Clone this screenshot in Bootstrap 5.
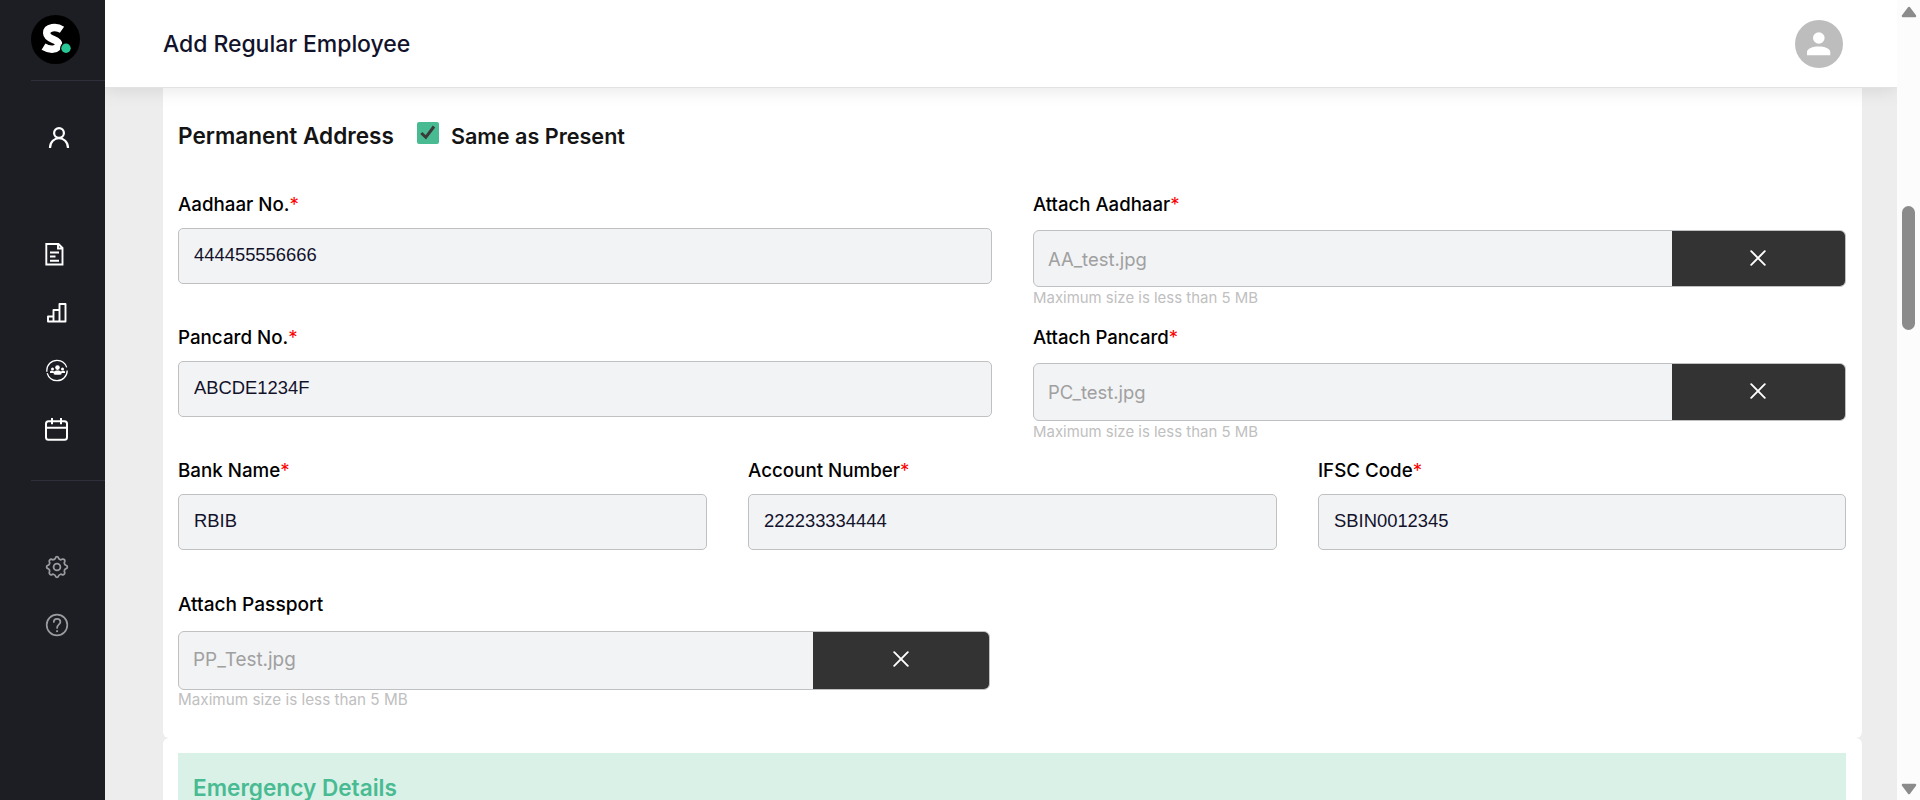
<!DOCTYPE html>
<html lang="en">
<head>
<meta charset="utf-8">
<meta name="viewport" content="width=device-width, initial-scale=1">
<title>Add Regular Employee</title>
<link href="https://cdn.jsdelivr.net/npm/bootstrap@5.3.0/dist/css/bootstrap.min.css" rel="stylesheet">
<style>
  body { font-family: Inter, "Liberation Sans", sans-serif; background: #ededed; color: #000; }
  .side { width: 105px; background: #1d1e23; color: #fff; }
  .side svg { display: block; flex: none; }
  .logo-wrap { padding: 15px 0 16px 31px; }
  .rule { height: 1px; margin-left: 31px; background: #2e303b; }
  .side-link { height: 58.3px; padding-left: 45px; color: inherit; }
  .side-foot { color: #9b9ca0; padding-top: 56px; }
  .topbar { height: 88px; border-bottom: 1px solid #e2e2e2; padding: 0 54px 0 58px; box-shadow: 0 2px 18px rgba(0,0,0,.1); z-index: 2; }
  .page-title { font-size: 23px; font-weight: 500; color: #12122b; letter-spacing: -.06px; padding-top: 2px; }
  .sheet { margin: 0 35px 0 58px; background: #fff; }
  .sheet-main { height: 650px; border-radius: 0 0 6px 6px; padding: 34px 16px 0 15px; }
  .sheet-next { border-radius: 6px 6px 0 0; padding: 15px 16px 0 15px; height: 200px; }
  .section-head { height: 28px; font-size: 22.6px; font-weight: 600; color: #141414; line-height: 28px; }
  .same { font-size: 21.6px; }
  .tick { width: 22px; height: 22px; background: #49bb92; border-radius: 2px; margin: -6px 12px 0 23px; }
  .fields { display: grid; column-gap: 41px; height: 133.2px; }
  .two { grid-template-columns: 814px 813px; }
  .three { grid-template-columns: 529px 529px 528px; }
  .lbl { display: block; height: 28px; line-height: 28px; padding-top: 1px; font-size: 18.75px; font-weight: 500; margin-bottom: 10px; }
  .lbl i { font-style: normal; font-weight: 400; color: #f00; }
  .form-control.inp { height: 56px; border: 1px solid #bfc0c1; border-radius: 5px; background: #f2f3f5; padding: 0 15px 2px; font: 18.4px "Liberation Sans", Arial, sans-serif; color: #12122b; box-shadow: none; }
  .attach .lbl { margin-bottom: 12px; padding-top: 0; font-size: 18.6px; }
  .filebox { height: 57.4px; border: 1px solid #bfc0c1; border-radius: 6px; background: #f2f3f5; overflow: hidden; }
  .fname { padding-left: 14px; padding-top: 2px; font-size: 18.45px; color: #a0a0a0; }
  .remove { width: 173px; background: #333; border: 0; margin: -1px 0; padding: 0 1px 2px 0; color: #fff; }
  .hint { font-size: 14.95px; line-height: 20px; margin-top: 1px; color: #c0c0c0; }
  .passport { width: 812px; }
  .attach.passport .lbl { font-size: 19.1px; margin-bottom: 13px; }
  .passport .filebox { height: 59px; }
  .passport .fname { font-size: 18.9px; padding-left: 14px; padding-top: 0; }
  .passport .remove { width: 176px; }
  .passport .hint { font-size: 15.25px; margin-top: 0; }
  .banner { background: #daf1e8; color: #49bb92; height: 90px; padding: 21px 15px; font-size: 22.6px; font-weight: 600; line-height: 28px; }
  .scroller { width: 23px; background: #fcfcfc; color: #8b8b8b; padding: 6px 0 5px; }
  .thumb { width: 13px; height: 124px; border-radius: 7px; background: #8b8b8b; margin-top: 188px; }
</style>
</head>
<body class="vh-100 overflow-hidden">
<div class="d-flex vh-100 overflow-hidden">
  <aside class="side flex-shrink-0">
    <div class="logo-wrap">
      <svg width="49" height="49" viewBox="0 0 49 49"><circle cx="24.5" cy="24.5" r="24.5" fill="#000"/><path d="M31 14.800C25.500 11 15.500 12 15.700 18.200C16 25.500 28 23.500 27.500 29.200C27 35.500 18.500 35.300 12.500 31.700" fill="none" stroke="#fff" stroke-width="7.400"/><circle cx="35" cy="33.500" r="6" fill="#000"/><circle cx="35" cy="33.300" r="4.700" fill="#29c795"/></svg>
    </div>
    <div class="rule"></div>
    <nav class="d-flex flex-column">
      <a class="side-link d-flex align-items-center ps-0" style="margin-top:28px" href="#"><svg style="margin-left:48px" width="22" height="24" viewBox="0 0 22 24" fill="none" stroke="#fff" stroke-width="2.200"><circle cx="11" cy="7" r="4.900"/><path d="M2 22C2 9 20 9 20 22"/></svg></a>
      <a class="side-link d-flex align-items-center" style="margin-top:58px" href="#"><svg width="20" height="24" viewBox="0 0 20 24" fill="none" stroke="#fff" stroke-width="1.900"><path d="M1.300 2H13.500L17.500 6V22.500H1.300ZM13 2V6.500H17.500M5 10.500H14M5 14.500H10.500M5 18.700H14"/></svg></a>
      <a class="side-link d-flex align-items-center" href="#"><svg width="24" height="24" viewBox="0 0 24 24" fill="none" stroke="#fff" stroke-width="1.900" stroke-linejoin="round"><path d="M3 20.500V15.500H8.500V9H14.500V3H20.500V20.500ZM8.500 15.500V20.500M14.500 9V20.500"/></svg></a>
      <a class="side-link d-flex align-items-center" href="#"><svg width="24" height="24" viewBox="0 0 24 24" fill="#fff"><circle cx="12" cy="11.500" r="10.200" fill="none" stroke="#fff" stroke-width="1.300" stroke-dasharray="29 1.500 30 3.500"/><circle cx="12.500" cy="8.600" r="2.300"/><circle cx="7.500" cy="10" r="1.500"/><circle cx="17.500" cy="10" r="1.500"/><path d="M5 14V12.800C5 11.500 8 11.500 9 12.500L11 11.500H14L16 12.500C17 11.500 20 11.500 20 12.800V14H16.500V15.200C15 16 10 16 8.700 15.200V14Z"/></svg></a>
      <a class="side-link d-flex align-items-center" href="#"><svg width="24" height="24" viewBox="0 0 24 24" fill="none" stroke="#fff" stroke-width="2"><rect x="1" y="4.200" width="21" height="18.500" rx="2.500"/><path d="M1 10.700H22M7 1V7.300M16 1V7.300"/></svg></a>
    </nav>
    <div class="rule" style="margin-top:22px"></div>
    <div class="side-foot">
      <a class="side-link d-flex align-items-center" href="#"><svg width="24" height="24" viewBox="0 0 24 24" fill="none" stroke="currentColor" stroke-width="1.800" stroke-linejoin="round"><circle cx="12" cy="12" r="3.400"/><path d="M10.300 3.500Q10.500 1.600 12 1.600T13.700 3.500Q14 4.300 15.300 4.700Q16.300 5 17.200 4.200Q18.700 3.800 19.600 4.900Q20.100 6 19.600 6.900Q19 7.800 19.500 8.800Q19.800 9.900 20.700 10.200Q22.400 10.600 22.400 12T20.700 13.800Q19.800 14.100 19.500 15.200Q19 16.200 19.600 17.100Q20.100 18.200 19.200 19.200Q18.200 20.200 17.100 19.600Q16.200 19 15.200 19.500Q14 19.800 13.700 20.700Q13.400 22.400 12 22.400T10.300 20.700Q10 19.800 8.800 19.500Q7.800 19 6.900 19.600Q5.800 20.200 4.800 19.200Q3.900 18.200 4.400 17.100Q5 16.200 4.500 15.200Q4.200 14.100 3.300 13.800Q1.600 13.400 1.600 12T3.300 10.200Q4.200 9.900 4.500 8.800Q5 7.800 4.400 6.900Q3.900 5.800 4.800 4.800Q5.800 3.900 6.900 4.400Q7.800 5 8.800 4.500Q10 4.300 10.300 3.500Z"/></svg></a>
      <a class="side-link d-flex align-items-center" href="#"><svg width="24" height="24" viewBox="0 0 24 24" fill="none" stroke="currentColor" stroke-width="1.700"><circle cx="12" cy="12" r="10.300"/><path d="M8.800 9C8.800 4.800 15.400 4.800 15.400 9C15.400 11.500 12.100 11.500 12.100 15" stroke-linecap="round"/><path d="M12.100 17.300V19.100" stroke-width="1.900"/></svg></a>
    </div>
  </aside>

  <main class="flex-grow-1 d-flex flex-column overflow-hidden">
    <header class="topbar bg-white d-flex align-items-center justify-content-between flex-shrink-0 position-relative">
      <h1 class="page-title mb-0">Add Regular Employee</h1>
      <svg width="48" height="48" viewBox="0 0 48 48"><circle cx="24" cy="24" r="24" fill="#bdbdbd"/><circle cx="23.800" cy="18" r="5.800" fill="#fff"/><path d="M12 35.300V32C12 24.500 35.300 24.500 35.300 32V35.300Z" fill="#fff"/></svg>
    </header>

    <section class="sheet sheet-main flex-shrink-0">
      <div class="section-head d-flex align-items-center">
        <span>Permanent Address</span>
        <span class="tick"><svg class="d-block" width="22" height="22" viewBox="0 0 22 22"><path d="M4.300 11L8.800 15.300L17 4.500" fill="none" stroke="#3a3a3a" stroke-width="3"/></svg></span>
        <span class="same">Same as Present</span>
      </div>
      <div class="fields two" style="margin-top:40px">
        <div><label class="lbl">Aadhaar No.<i>*</i></label><input class="form-control inp" value="444455556666"></div>
        <div class="attach"><label class="lbl">Attach Aadhaar<i>*</i></label>
          <div class="filebox d-flex align-items-stretch"><span class="fname flex-grow-1 align-self-center">AA_test.jpg</span><button class="remove d-flex align-items-center justify-content-center"><svg width="16" height="16" viewBox="0 0 16 16" stroke="#fff" stroke-width="1.900" stroke-linecap="round"><path d="M1.200 1.200L14.800 14.800M14.800 1.200L1.200 14.800"/></svg></button></div>
          <div class="hint">Maximum size is less than 5 MB</div></div>
      </div>
      <div class="fields two">
        <div><label class="lbl">Pancard No.<i>*</i></label><input class="form-control inp" value="ABCDE1234F"></div>
        <div class="attach"><label class="lbl">Attach Pancard<i>*</i></label>
          <div class="filebox d-flex align-items-stretch"><span class="fname flex-grow-1 align-self-center">PC_test.jpg</span><button class="remove d-flex align-items-center justify-content-center"><svg width="16" height="16" viewBox="0 0 16 16" stroke="#fff" stroke-width="1.900" stroke-linecap="round"><path d="M1.200 1.200L14.800 14.800M14.800 1.200L1.200 14.800"/></svg></button></div>
          <div class="hint">Maximum size is less than 5 MB</div></div>
      </div>
      <div class="fields three">
        <div><label class="lbl">Bank Name<i>*</i></label><input class="form-control inp" value="RBIB"></div>
        <div><label class="lbl">Account Number<i>*</i></label><input class="form-control inp" value="222233334444"></div>
        <div><label class="lbl">IFSC Code<i>*</i></label><input class="form-control inp" value="SBIN0012345"></div>
      </div>
      <div class="attach passport"><label class="lbl">Attach Passport</label>
        <div class="filebox d-flex align-items-stretch"><span class="fname flex-grow-1 align-self-center">PP_Test.jpg</span><button class="remove d-flex align-items-center justify-content-center"><svg width="16" height="16" viewBox="0 0 16 16" stroke="#fff" stroke-width="1.900" stroke-linecap="round"><path d="M1.200 1.200L14.800 14.800M14.800 1.200L1.200 14.800"/></svg></button></div>
        <div class="hint">Maximum size is less than 5 MB</div></div>
    </section>

    <section class="sheet sheet-next flex-shrink-0">
      <div class="banner">Emergency Details</div>
    </section>
  </main>

  <div class="scroller flex-shrink-0 d-flex flex-column align-items-center">
    <svg width="16" height="12" viewBox="0 0 16 12"><path d="M8 2L14 10H2Z" fill="currentColor" stroke="currentColor" stroke-width="2.500" stroke-linejoin="round"/></svg>
    <div class="thumb"></div>
    <svg class="mt-auto" width="16" height="12" viewBox="0 0 16 12"><path d="M8 10L14 2H2Z" fill="currentColor" stroke="currentColor" stroke-width="2.500" stroke-linejoin="round"/></svg>
  </div>
</div>
<script src="https://cdn.jsdelivr.net/npm/bootstrap@5.3.0/dist/js/bootstrap.bundle.min.js"></script>
</body>
</html>
